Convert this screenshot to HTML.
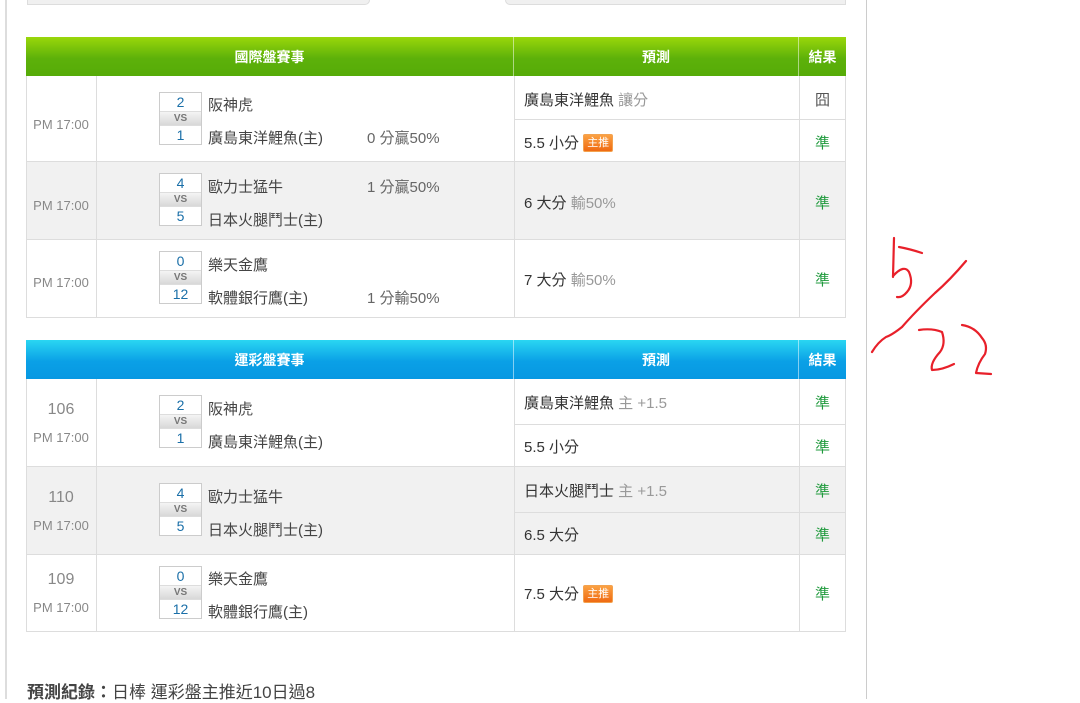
<!DOCTYPE html>
<html><head><meta charset="utf-8">
<style>
*{margin:0;padding:0;box-sizing:border-box}
body{width:1080px;height:699px;background:#fff;position:relative;overflow:hidden;font-family:"Liberation Sans","Noto Sans CJK TC",sans-serif;color:#333;font-size:14px}
.a{position:absolute}
.hd{position:absolute;height:39px;color:#fff;font-weight:bold;font-size:14px;display:flex;align-items:center;justify-content:center;border-right:1px solid rgba(255,255,255,.5)}
.g{background:linear-gradient(#9ad70a,#5db10a 55%,#56ab08)}
.b{background:linear-gradient(#2ad6f2,#0aa0e6 55%,#0798e2)}
.row{position:absolute;left:26px;width:820px;border:1px solid #ddd;border-top:none}
.t{position:absolute;left:0;width:70px;text-align:center;color:#888;font-size:13px}
.n{font-size:16px;color:#888}
.sc{position:absolute;left:159px;width:43px;border:1px solid #ccc;background:#fff}
.sc div{height:18px;text-align:center;color:#1a6fa8;font-size:14px;line-height:18px}
.sc .vs{height:15px;background:linear-gradient(#f4f4f4,#d8d8d8);color:#777;font-size:10px;font-weight:bold;line-height:13px;border-top:1px solid #ddd;border-bottom:1px solid #ddd}
.tm{position:absolute;left:208px;font-size:15px;color:#444}
.hc{position:absolute;left:367px;font-size:15px;color:#666}
.p{position:absolute;left:524px;font-size:15px;color:#333}
.p span{color:#999}
.r{position:absolute;left:799px;width:47px;text-align:center;font-size:15px;color:#1f9a3c}
.tag{display:inline-block;background:linear-gradient(#fba142,#ef6a12);color:#fff;font-size:11px;padding:0 3px;line-height:16px;border-radius:2px;border:1px solid #f3a24f;vertical-align:2px;font-style:normal}
.hl{position:absolute;left:514px;width:332px;height:1px;background:#ddd}
</style></head><body>
<div class="a" style="left:5px;top:0;width:2px;height:699px;background:#ddd"></div>
<div class="a" style="left:866px;top:0;width:1px;height:699px;background:#ccc"></div>
<div class="a" style="left:27px;top:0;width:343px;height:5px;background:#f0f0f0;border:1px solid #ddd;border-top:none;border-radius:0 0 6px 0"></div>
<div class="a" style="left:505px;top:0;width:341px;height:5px;background:#f0f0f0;border:1px solid #ddd;border-top:none;border-radius:0 0 0 6px"></div>

<div class="hd g" style="left:26px;top:37px;width:488px">國際盤賽事</div>
<div class="hd g" style="left:514px;top:37px;width:285px">預測</div>
<div class="hd g" style="left:799px;top:37px;width:47px;border-right:none">結果</div>

<div class="row" style="top:76px;height:86px;background:#fff"></div>
<div class="row" style="top:162px;height:78px;background:#f1f1f1"></div>
<div class="row" style="top:240px;height:78px;background:#fff"></div>
<div class="a" style="left:96px;top:76px;width:1px;height:242px;background:#ddd"></div>
<div class="a" style="left:514px;top:76px;width:1px;height:242px;background:#ddd"></div>
<div class="a" style="left:799px;top:76px;width:1px;height:242px;background:#ddd"></div>
<div class="hl" style="top:119px"></div>

<div class="t" style="left:26px;top:117px">PM 17:00</div>
<div class="sc" style="top:92px"><div>2</div><div class="vs">VS</div><div>1</div></div>
<div class="tm" style="top:94px">阪神虎</div>
<div class="tm" style="top:127px">廣島東洋鯉魚(主)</div>
<div class="hc" style="top:127px">0 分贏50%</div>
<div class="p" style="top:89px">廣島東洋鯉魚 <span>讓分</span></div>
<div class="r" style="top:89px;color:#555">囧</div>
<div class="p" style="top:132px">5.5 小分 <i class="tag">主推</i></div>
<div class="r" style="top:132px">準</div>

<div class="t" style="left:26px;top:198px">PM 17:00</div>
<div class="sc" style="top:173px"><div>4</div><div class="vs">VS</div><div>5</div></div>
<div class="tm" style="top:176px">歐力士猛牛</div>
<div class="tm" style="top:209px">日本火腿鬥士(主)</div>
<div class="hc" style="top:176px">1 分贏50%</div>
<div class="p" style="top:192px">6 大分 <span>輸50%</span></div>
<div class="r" style="top:192px">準</div>

<div class="t" style="left:26px;top:275px">PM 17:00</div>
<div class="sc" style="top:251px"><div>0</div><div class="vs">VS</div><div>12</div></div>
<div class="tm" style="top:254px">樂天金鷹</div>
<div class="tm" style="top:287px">軟體銀行鷹(主)</div>
<div class="hc" style="top:287px">1 分輸50%</div>
<div class="p" style="top:269px">7 大分 <span>輸50%</span></div>
<div class="r" style="top:269px">準</div>

<div class="hd b" style="left:26px;top:340px;width:488px">運彩盤賽事</div>
<div class="hd b" style="left:514px;top:340px;width:285px">預測</div>
<div class="hd b" style="left:799px;top:340px;width:47px;border-right:none">結果</div>

<div class="row" style="top:379px;height:88px;background:#fff"></div>
<div class="row" style="top:467px;height:88px;background:#f1f1f1"></div>
<div class="row" style="top:555px;height:77px;background:#fff"></div>
<div class="a" style="left:96px;top:379px;width:1px;height:253px;background:#ddd"></div>
<div class="a" style="left:514px;top:379px;width:1px;height:253px;background:#ddd"></div>
<div class="a" style="left:799px;top:379px;width:1px;height:253px;background:#ddd"></div>
<div class="hl" style="top:424px"></div>
<div class="hl" style="top:512px"></div>

<div class="t n" style="left:26px;top:401px">106</div>
<div class="t" style="left:26px;top:430px">PM 17:00</div>
<div class="sc" style="top:395px"><div>2</div><div class="vs">VS</div><div>1</div></div>
<div class="tm" style="top:398px">阪神虎</div>
<div class="tm" style="top:431px">廣島東洋鯉魚(主)</div>
<div class="p" style="top:392px">廣島東洋鯉魚 <span>主 +1.5</span></div>
<div class="r" style="top:392px">準</div>
<div class="p" style="top:436px">5.5 小分</div>
<div class="r" style="top:436px">準</div>

<div class="t n" style="left:26px;top:489px">110</div>
<div class="t" style="left:26px;top:518px">PM 17:00</div>
<div class="sc" style="top:483px"><div>4</div><div class="vs">VS</div><div>5</div></div>
<div class="tm" style="top:486px">歐力士猛牛</div>
<div class="tm" style="top:519px">日本火腿鬥士(主)</div>
<div class="p" style="top:480px">日本火腿鬥士 <span>主 +1.5</span></div>
<div class="r" style="top:480px">準</div>
<div class="p" style="top:524px">6.5 大分</div>
<div class="r" style="top:524px">準</div>

<div class="t n" style="left:26px;top:571px">109</div>
<div class="t" style="left:26px;top:600px">PM 17:00</div>
<div class="sc" style="top:566px"><div>0</div><div class="vs">VS</div><div>12</div></div>
<div class="tm" style="top:568px">樂天金鷹</div>
<div class="tm" style="top:601px">軟體銀行鷹(主)</div>
<div class="p" style="top:583px">7.5 大分 <i class="tag">主推</i></div>
<div class="r" style="top:583px">準</div>

<div class="a" style="left:27px;top:678px;font-size:17px;color:#444"><b>預測紀錄：</b>日棒 運彩盤主推近10日過8</div>

<svg class="a" style="left:850px;top:220px" width="170" height="170" viewBox="0 0 170 170" fill="none" stroke="#e8202a" stroke-width="2.2" stroke-linecap="round" stroke-linejoin="round">
<path d="M44 18 L43 57"/><path d="M49 27 Q60 29 72 33"/>
<path d="M43 56 Q54 44 59 52 Q64 64 57 72 Q52 78 47 77"/>
<path d="M116 41 Q100 60 85 73 Q65 92 52 107 Q42 115 36 117 Q28 122 22 132"/>
<path d="M69 110 Q82 108 92 112 Q96 124 90 132 Q80 143 82 150 Q92 150 104 144"/>
<path d="M112 105 Q125 107 132 118 Q138 125 135 134 Q128 143 126 153 L141 154"/>
</svg>
</body></html>
